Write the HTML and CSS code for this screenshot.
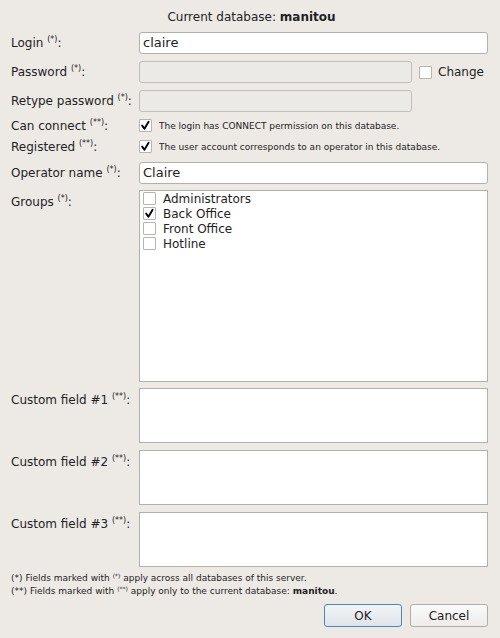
FILE: index.html
```html
<!DOCTYPE html>
<html>
<head>
<meta charset="utf-8">
<link rel="stylesheet" href="styles.css">
</head>
<body>
<div class="dialog">
  <div class="title">Current database: <b>manitou</b></div>

  <div class="row r-login">
    <label class="lbl">Login <sup>(*)</sup>:</label>
    <div class="field"><div class="input">claire</div></div>
  </div>

  <div class="row r-pass">
    <label class="lbl">Password <sup>(*)</sup>:</label>
    <div class="field with-change">
      <div class="input disabled short"></div>
      <span class="cb"></span><span class="cb-text">Change</span>
    </div>
  </div>

  <div class="row r-retype">
    <label class="lbl">Retype password <sup>(*)</sup>:</label>
    <div class="field"><div class="input disabled short"></div></div>
  </div>

  <div class="row r-check">
    <label class="lbl">Can connect <sup>(**)</sup>:</label>
    <div class="field check-line">
      <span class="cb checked"><svg viewBox="0 0 13 13" width="13" height="13"><path d="M3.2 6.6 L5.4 9.8 L9.6 2.8" fill="none" stroke="#000" stroke-width="1.9" stroke-linecap="round" stroke-linejoin="round"/></svg></span>
      <span class="small">The login has CONNECT permission on this database.</span>
    </div>
  </div>

  <div class="row r-check">
    <label class="lbl">Registered <sup>(**)</sup>:</label>
    <div class="field check-line">
      <span class="cb checked"><svg viewBox="0 0 13 13" width="13" height="13"><path d="M3.2 6.6 L5.4 9.8 L9.6 2.8" fill="none" stroke="#000" stroke-width="1.9" stroke-linecap="round" stroke-linejoin="round"/></svg></span>
      <span class="small">The user account corresponds to an operator in this database.</span>
    </div>
  </div>

  <div class="row r-oper">
    <label class="lbl">Operator name <sup>(*)</sup>:</label>
    <div class="field"><div class="input">Claire</div></div>
  </div>

  <div class="row r-groups top">
    <label class="lbl">Groups <sup>(*)</sup>:</label>
    <div class="field">
      <div class="list">
        <div class="item"><span class="cb"></span>Administrators</div>
        <div class="item"><span class="cb checked"><svg viewBox="0 0 13 13" width="13" height="13"><path d="M3.2 6.6 L5.4 9.8 L9.6 2.8" fill="none" stroke="#000" stroke-width="1.9" stroke-linecap="round" stroke-linejoin="round"/></svg></span>Back Office</div>
        <div class="item"><span class="cb"></span>Front Office</div>
        <div class="item"><span class="cb"></span>Hotline</div>
      </div>
    </div>
  </div>

  <div class="row r-custom top">
    <label class="lbl">Custom field #1 <sup>(**)</sup>:</label>
    <div class="field"><div class="textarea"></div></div>
  </div>
  <div class="row r-custom top">
    <label class="lbl">Custom field #2 <sup>(**)</sup>:</label>
    <div class="field"><div class="textarea"></div></div>
  </div>
  <div class="row r-custom top last">
    <label class="lbl">Custom field #3 <sup>(**)</sup>:</label>
    <div class="field"><div class="textarea"></div></div>
  </div>

  <div class="notes">
    <div class="note">(*) Fields marked with <sup>(*)</sup> apply across all databases of this server.</div>
    <div class="note">(**) Fields marked with <sup>(**)</sup> apply only to the current database: <b>manitou</b>.</div>
  </div>

  <div class="buttons">
    <button class="btn default">OK</button>
    <button class="btn">Cancel</button>
  </div>
</div>
</body>
</html>
```

FILE: styles.css
```css
* { box-sizing: border-box; }
html, body {
  margin: 0;
  padding: 0;
  background: #edeae6;
}
body {
  font-family: "DejaVu Sans", sans-serif;
  font-size: 12px;
  color: #1f2224;
}
.dialog {
  width: 500px;
  height: 638px;
  padding: 0 12px 0 11px;
  display: flex;
  flex-direction: column;
}
.title {
  height: 32px;
  padding-top: 10px;
  line-height: 14px;
  text-align: center;
  padding-left: 4px;
}
.row {
  display: grid;
  grid-template-columns: 128px 1fr;
  align-items: center;
}
.row.top { align-items: start; }
.lbl {
  line-height: 14px;
  white-space: nowrap;
}
.row.top .lbl { padding-top: 5px; }
sup {
  font-size: 8px;
  line-height: 0;
  vertical-align: baseline;
  position: relative;
  top: -5px;
}
.r-login { height: 22px; margin-bottom: 7px; }
.r-pass { height: 22px; margin-bottom: 7px; }
.r-retype { height: 22px; margin-bottom: 3px; }
.r-check { height: 21px; }
.r-check + .r-oper { margin-top: 5px; }
.r-oper { height: 22px; margin-bottom: 6px; }
.r-groups { margin-bottom: 6px; }
.r-custom { margin-bottom: 7px; }
.r-custom.last { margin-bottom: 5px; }

.field { display: flex; align-items: center; }
.input {
  flex: 1;
  height: 22px;
  border: 1px solid #b3afab;
  border-radius: 3px;
  background: #fff;
  padding: 0 3px;
  line-height: 20px;
  font-size: 13px;
}
.input.short { flex: 0 0 273px; }
.input.disabled { background: #eceae6; border-color: #c2beba; }
.with-change .cb { margin-left: 7px; margin-right: 6px; }

.cb {
  display: inline-block;
  width: 13px;
  height: 13px;
  border: 1px solid #b8b4b0;
  border-radius: 1px;
  background: #fff;
  position: relative;
  flex: 0 0 13px;
}
.cb svg { position: absolute; left: -1px; top: -1px; }
.cb-text { line-height: 14px; }
.check-line .cb { margin-right: 7px; }
.small { font-size: 9px; line-height: 12px; }

.list {
  flex: 1;
  height: 192px;
  border: 1px solid #b3afab;
  background: #fff;
  padding: 0 0 0 3px;
}
.item {
  height: 15px;
  display: flex;
  align-items: center;
  font-size: 12px;
  line-height: 14px;
}
.item .cb { margin-right: 7px; }
.textarea {
  flex: 1;
  height: 55px;
  border: 1px solid #b3afab;
  background: #fff;
}
.notes {
  font-size: 9px;
}
.note {
  height: 13px;
  line-height: 13px;
}
.notes sup { font-size: 6px; top: -3px; }
.buttons {
  display: flex;
  justify-content: flex-end;
  gap: 8px;
  margin-top: 6px;
}
.btn {
  width: 78px;
  height: 23px;
  font-family: "DejaVu Sans", sans-serif;
  font-size: 12px;
  color: #1f2224;
  border: 1px solid #b1ada9;
  border-radius: 3px;
  background: linear-gradient(#fafafa, #eeecea);
  padding: 0;
}
.btn.default {
  border-color: #4a86c0;
  background: linear-gradient(#f2f4f6, #dfe4e9);
}
```
